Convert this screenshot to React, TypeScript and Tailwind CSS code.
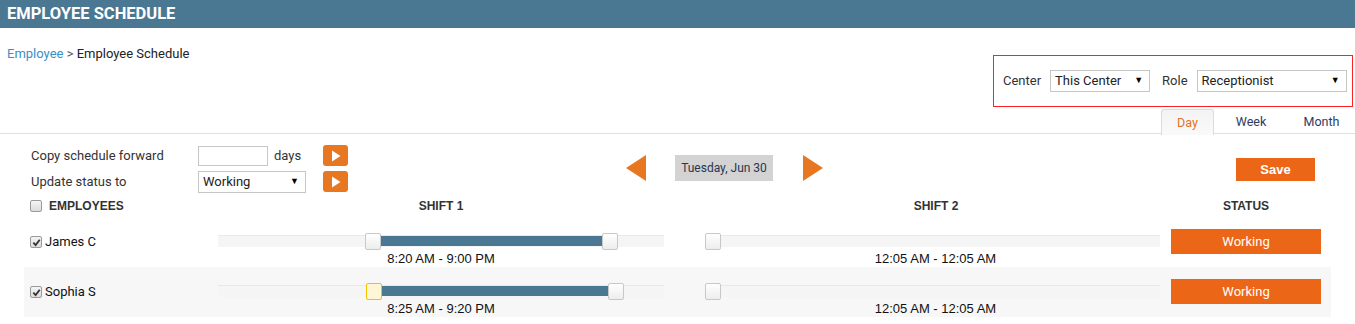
import React from "react";

const rows = [
  {
    name: "James C",
    shift1: { from: 500, to: 1260, label: "8:20 AM - 9:00 PM" },
    shift2: { label: "12:05 AM - 12:05 AM" },
    active: false,
    bg: "bg-white",
  },
  {
    name: "Sophia S",
    shift1: { from: 505, to: 1280, label: "8:25 AM - 9:20 PM" },
    shift2: { label: "12:05 AM - 12:05 AM" },
    active: true,
    bg: "bg-[#f7f7f7]",
  },
];

function Check({ checked }: { checked?: boolean }) {
  return (
    <span className="inline-flex w-[12px] h-[12px] rounded-[2px] border border-[#9a9a9a] bg-gradient-to-b from-[#f4f4f4] to-[#dcdcdc] items-center justify-center">
      {checked && (
        <svg width="9" height="9" viewBox="0 0 10 10">
          <path d="M1.5 5.2 L4 7.8 L8.6 2" fill="none" stroke="#333" strokeWidth="2" />
        </svg>
      )}
    </span>
  );
}

function PlayButton() {
  return (
    <button className="w-[25px] h-[21px] rounded-[3px] bg-[#e87722] flex items-center justify-center">
      <svg width="10" height="12" viewBox="0 0 10 12">
        <polygon points="1,0.5 9.5,6 1,11.5" fill="#fff" />
      </svg>
    </button>
  );
}

function Handle({ left, active }: { left: string; active?: boolean }) {
  return (
    <span
      className={
        "absolute top-[-3px] w-[16px] h-[17px] rounded-[2px] border " +
        (active
          ? "border-[#f2c200] bg-[#fff6d6]"
          : "border-[#c8c8c8] bg-gradient-to-b from-[#ffffff] to-[#ededed]")
      }
      style={{ left }}
    />
  );
}

function Slider({ from, to, active }: { from?: number; to?: number; active?: boolean }) {
  const pct = (m: number) => (m / 1440) * 100;
  return (
    <div className="relative h-[12px] bg-[#f5f5f5] border-t border-[#e9e9e9]">
      {from !== undefined && to !== undefined ? (
        <>
          <span
            className="absolute top-[0px] h-[10px] bg-[#4a7791]"
            style={{ left: `calc(${pct(from)}% + 8px)`, width: `calc(${pct(to) - pct(from)}% - 8px)` }}
          />
          <Handle left={`calc(${pct(from)}% - 8px)`} active={active} />
          <Handle left={`calc(${pct(to)}% - 6px)`} />
        </>
      ) : (
        <Handle left="0px" />
      )}
    </div>
  );
}

function FakeSelect({ value, className }: { value: string; className: string }) {
  return (
    <div
      className={
        "flex items-center justify-between border border-[#c6c6c6] bg-white pl-[4px] pr-[6px] text-[13px] text-[#222] " +
        className
      }
    >
      <span>{value}</span>
      <span className="text-[9px] text-black">▼</span>
    </div>
  );
}

export default function App() {
  return (
    <div className="w-[1355px] h-[324px] bg-white overflow-hidden font-['Roboto',sans-serif] text-[#333]">
      <div className="h-[28px] bg-[#4a7791] flex items-center pl-[7px]">
        <h1 className="text-white font-bold text-[16.5px]">EMPLOYEE SCHEDULE</h1>
      </div>

      <div className="flex justify-between">
        <div className="pl-[7px] pt-[16px] text-[13px]">
          <span className="text-[#3a8fc8]">Employee</span>
          <span className="text-[#555]"> &gt; </span>
          <span className="text-[#222]">Employee Schedule</span>
        </div>
        <div className="mt-[27px] mr-[2px] w-[360px] h-[52px] border border-[#ff2222] flex items-center pl-[9px] text-[13px] text-[#333]">
          <span>Center</span>
          <FakeSelect value="This Center" className="ml-[9px] w-[100px] h-[22px]" />
          <span className="ml-[12px]">Role</span>
          <FakeSelect value="Receptionist" className="ml-[9px] w-[150px] h-[22px]" />
        </div>
      </div>

      <div className="flex justify-end h-[27px] border-b border-[#e0e0e0] pt-[2px] text-[12.5px]">
        <div className="w-[53px] h-[26px] border border-b-0 border-[#dcdcdc] rounded-t-[3px] bg-gradient-to-b from-[#f3f3f3] to-[#fafafa] flex items-center justify-center pt-[2px] text-[#e8702a]">
          Day
        </div>
        <div className="w-[74px] flex items-center justify-center pt-[2px] text-[#2c3d63]">Week</div>
        <div className="w-[67px] flex items-center justify-center pt-[2px] text-[#2c3d63]">Month</div>
      </div>

      <div className="flex h-[60px]">
        <div className="w-[626px] pl-[31px] pt-[11px] text-[13px] text-[#333] flex flex-col gap-[5px]">
          <div className="flex items-center h-[21px]">
            <span className="w-[167px]">Copy schedule forward</span>
            <div className="w-[70px] h-[20px] border border-[#c6c6c6] bg-white" />
            <span className="w-[55px] pl-[6px] text-[13px]">days</span>
            <PlayButton />
          </div>
          <div className="flex items-center h-[21px]">
            <span className="w-[167px]">Update status to</span>
            <FakeSelect value="Working" className="w-[108px] h-[22px]" />
            <span className="w-[17px]" />
            <PlayButton />
          </div>
        </div>

        <div className="flex items-start pt-[21px]">
          <svg width="20" height="26" viewBox="0 0 20 26">
            <polygon points="20,0 0,13 20,26" fill="#e87722" />
          </svg>
          <div className="ml-[29px] w-[98px] h-[26px] bg-[#d3d3d3] flex items-center justify-center text-[12px] text-[#2a3550]">
            Tuesday, Jun 30
          </div>
          <svg className="ml-[30px]" width="20" height="26" viewBox="0 0 20 26">
            <polygon points="0,0 20,13 0,26" fill="#e87722" />
          </svg>
        </div>

        <div className="flex-1" />
        <div className="pt-[23px] mr-[40px]">
          <button className="w-[79px] h-[23px] bg-[#ec6617] text-white font-bold text-[13px] font-['Liberation_Sans',sans-serif]">
            Save
          </button>
        </div>
      </div>

      <div className="ml-[24px] w-[1307px]">
        <div className="flex items-center h-[23px] font-['Liberation_Sans',sans-serif] font-bold text-[12px] text-[#333]">
          <div className="w-[194px] flex items-center pl-[6px]">
            <Check />
            <span className="ml-[7px]">EMPLOYEES</span>
          </div>
          <div className="w-[446px] text-center">SHIFT 1</div>
          <div className="w-[41px]" />
          <div className="w-[462px] text-center">SHIFT 2</div>
          <div className="w-[4px]" />
          <div className="w-[150px] text-center">STATUS</div>
        </div>

        {rows.map((r) => (
          <div key={r.name} className={"flex h-[50px] " + r.bg}>
            <div className="w-[194px] flex items-center pl-[6px] text-[13px] text-[#111]">
              <Check checked />
              <span className="ml-[3px]">{r.name}</span>
            </div>
            <div className="w-[446px] pt-[18px]">
              <Slider from={r.shift1.from} to={r.shift1.to} active={r.active} />
              <div className="text-center text-[13px] text-[#111] font-['Liberation_Sans',sans-serif] mt-[2px]">
                {r.shift1.label}
              </div>
            </div>
            <div className="w-[41px]" />
            <div className="w-[455px] pt-[18px]">
              <Slider />
              <div className="text-center text-[13px] text-[#111] font-['Liberation_Sans',sans-serif] mt-[2px] pl-[6px]">
                {r.shift2.label}
              </div>
            </div>
            <div className="w-[11px]" />
            <div className="pt-[12px]">
              <div className="w-[150px] h-[25px] bg-[#ec6617] text-white text-[13px] flex items-center justify-center">
                Working
              </div>
            </div>
          </div>
        ))}
      </div>
    </div>
  );
}
